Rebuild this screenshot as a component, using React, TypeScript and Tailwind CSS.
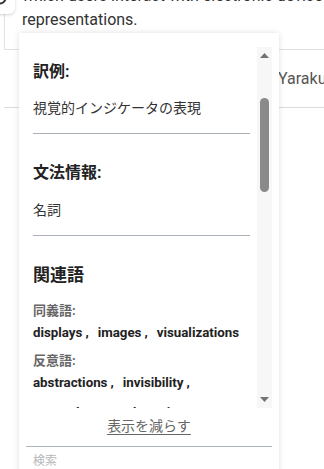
import React from "react";

function Items({ words }: { words: string[] }) {
  return (
    <div className="flex flex-wrap gap-y-[2px] text-[13.3px] leading-[28px] font-bold text-[#222]">
      {words.map((w, i) => (
        <span key={i} className="mr-[9px] whitespace-nowrap">
          {w}
          {i < words.length - 1 && <span className="ml-[3px]">,</span>}
        </span>
      ))}
    </div>
  );
}

export default function App() {
  return (
    <div className="relative w-[324px] h-[469px] overflow-hidden bg-white font-[family-name:Roboto,'Noto_Sans_CJK_JP',sans-serif]">
      {/* background page: top card */}
      <div className="ml-[4px] mt-[-16px] border-l border-b border-[#e2e2e2] pl-[17px] pb-[17px] text-[16px] leading-[24px] text-[#333] whitespace-nowrap">
        <div>which users interact with electronic devices through visual</div>
        <div>representations.</div>
      </div>
      {/* background row */}
      <div className="ml-[4px] h-[58px] border-b border-[#dcdcdc] flex items-center pl-[274px] text-[16px] text-[#555] whitespace-nowrap">
        Yaraku
      </div>

      {/* top-left small button */}
      <div className="absolute left-[-6px] top-[-8px] w-[21px] h-[22px] rounded-[6px] bg-white shadow-[0_1px_3px_rgba(0,0,0,0.18)]">
        <svg className="absolute left-0 top-0" width="21" height="22" viewBox="0 0 21 22">
          <circle cx="6" cy="6" r="5.5" fill="none" stroke="#333" strokeWidth="2" />
        </svg>
      </div>

      {/* popup */}
      <div className="absolute left-[19px] top-[33px] w-[260px] h-[450px] bg-white shadow-[0_0_6px_rgba(0,0,0,0.13)] px-[7px] pt-[14px] flex flex-col">
        <div className="h-[361px] flex">
          <div className="flex-1 overflow-hidden px-[7px] pt-[13px]">
            <div className="text-[16px] leading-[24px] font-bold text-[#222]">訳例:</div>
            <div className="mt-[14px] text-[14px] leading-[20px] text-[#333]">視覚的インジケータの表現</div>
            <div className="mt-[15px] border-t border-[#a9b0b8]" />
            <div className="mt-[27px] text-[16px] leading-[24px] font-bold text-[#222]">文法情報:</div>
            <div className="mt-[15px] text-[14px] leading-[20px] text-[#333]">名詞</div>
            <div className="mt-[15px] border-t border-[#a9b0b8]" />
            <div className="mt-[27px] text-[17px] leading-[24px] font-semibold text-[#222]">関連語</div>
            <div className="mt-[16px] text-[13px] leading-[16px] font-bold text-[#666]">同義語:</div>
            <Items words={["displays", "images", "visualizations"]} />
            <div className="mt-[6px] text-[13px] leading-[16px] font-bold text-[#666]">反意語:</div>
            <Items words={["abstractions", "invisibility", "concealment", "obscurity"]} />
          </div>
          {/* scrollbar */}
          <div className="w-[15px] bg-[#f7f7f7] relative">
            <svg className="absolute left-0 top-[5px]" width="15" height="7" viewBox="0 0 15 7">
              <polygon points="3,6 12,6 7.5,1" fill="#737373" />
            </svg>
            <div className="absolute left-[3px] top-[51px] w-[9px] h-[94px] rounded-full bg-[#8a8a8a]" />
            <svg className="absolute left-0 top-[349px]" width="15" height="7" viewBox="0 0 15 7">
              <polygon points="3,1 12,1 7.5,6" fill="#737373" />
            </svg>
          </div>
        </div>
        <div className="mt-[8px] text-center text-[14px] leading-[20px] text-[#666]">
          <span className="underline underline-offset-[3px]">表示を減らす</span>
        </div>
        <div className="mt-[10px] border-t border-[#a9b4be] pl-[7px] pt-[5px] text-[12px] leading-[18px] text-[#b8b8b8]">
          検索
        </div>
      </div>
    </div>
  );
}
